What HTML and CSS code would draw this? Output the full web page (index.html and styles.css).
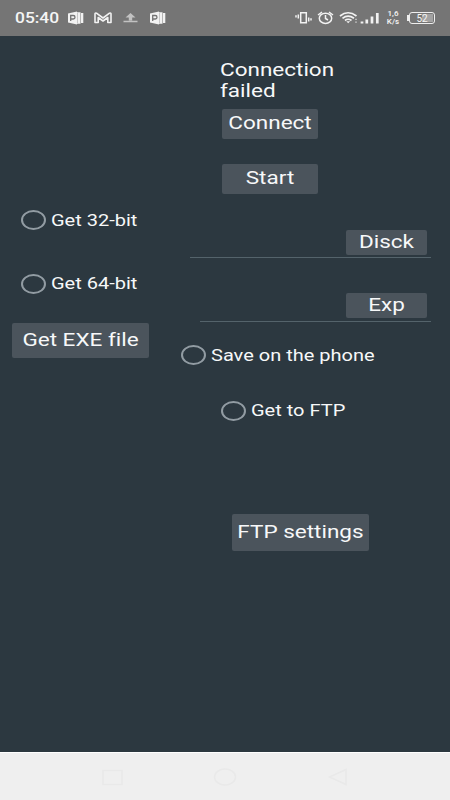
FILE: index.html
```html
<!DOCTYPE html>
<html lang="en">
<head>
<meta charset="utf-8">
<title>Connection</title>
<link rel="stylesheet" href="styles.css">
</head>
<body>
<div class="phone">
  <header class="status">
    <span class="clock"><span class="wide">05:40</span></span>
    <svg class="status-icons" width="102" height="36" viewBox="0 0 102 36" fill="#f2f2f2">
      <g id="doc">
        <path d="M0 13.500L9 11.500V24.500L0 22.500ZM9 12.200H12.500V23.800H9ZM13 13H15.300V23H13Z"/>
        <path d="M2.700 21V15.500H5.200Q7 15.500 7 17.200T5.200 19H3" fill="none" stroke="#757575" stroke-width="1.300"/>
        <path d="M9.500 13V23" stroke="#aaa" stroke-width=".6"/>
      </g>
      <path d="M27 22.500V14Q27 12.700 28.500 13.200L35 18L41.500 13.200Q43 12.700 43 14V22.500H39.800V17.500L35 21L30.200 17.500V22.500Z" fill="none" stroke="#f2f2f2" stroke-width="1.600" stroke-linejoin="round"/>
      <path d="M62.500 13L67.500 17.500H64.200V20.500H60.800V17.500H57.500ZM55.500 20.800H69.500V22.300H55.500Z" fill="#c2c2c2"/>
      <use href="#doc" x="82"/>
    </svg>
    <svg class="status-icons right" width="84" height="36" viewBox="0 0 84 36" fill="none" stroke="#f2f2f2" stroke-width="1.500">
      <path d="M5.700 12.800H11.300V22.700H5.700ZM3.300 14.500V18.500M1 15.200V17.500M13.700 17.500V21.500M16 18.200V20.500"/>
      <ellipse cx="30.500" cy="18.300" rx="6.200" ry="5.100"/>
      <path d="M30.500 15V18.500L33 20M23 15L27 12M38 15L34 12"/>
      <path d="M45 16Q53 9.500 61.500 16M47.500 18.300Q53 13.800 59 18.300M50 20.500Q53 18 56.500 20.500" stroke-width="1.700"/>
      <path d="M51.300 21.200L53.200 23.200L55.200 21.200Z" fill="#f2f2f2" stroke="none"/>
      <path d="M61 18.800V20M61 21.500V22.700" stroke="#cfcfcf"/>
      <path d="M67 21.500V23.500M71.800 19.500V23.500M77 16.500V23.500M82.300 13V23.500" stroke-width="2.700"/>
    </svg>
    <span class="speed"><span>1,6</span><span>K/s</span></span>
    <span class="battery"><span class="level">52</span></span>
  </header>

  <main class="screen">
    <section class="left">
      <label class="radio low"><i class="ring"></i><span class="wide">Get 32-bit</span></label>
      <label class="radio second"><i class="ring"></i><span class="wide">Get 64-bit</span></label>
      <button class="btn exe"><span class="wide">Get EXE file</span></button>
    </section>
    <section class="right-side">
      <p class="message"><span class="wide">Connection<br>failed</span></p>
      <button class="btn connect"><span class="wide">Connect</span></button>
      <button class="btn connect start"><span class="wide">Start</span></button>
      <div class="field disk"><button class="btn small"><span class="wide">Disck</span></button></div>
      <div class="field export"><button class="btn small"><span class="wide">Exp</span></button></div>
      <label class="radio low save"><i class="ring"></i><span class="wide">Save on the phone</span></label>
      <label class="radio ftp"><i class="ring"></i><span class="wide">Get to FTP</span></label>
      <button class="btn settings"><span class="wide">FTP settings</span></button>
    </section>
  </main>

  <nav class="nav">
    <svg width="450" height="47" viewBox="0 0 450 47" fill="none" stroke="#e9e9e9" stroke-width="1.500">
      <path d="M103 17.500H122V31.500H103Z"/>
      <ellipse cx="225" cy="24" rx="10.500" ry="8"/>
      <path d="M346 16.500V31.500L329.500 24Z"/>
    </svg>
  </nav>
</div>
</body>
</html>
```
FILE: styles.css
```css
* { box-sizing: border-box; }
body { margin: 0; }
.phone {
  width: 450px;
  height: 800px;
  display: flex;
  flex-direction: column;
  overflow: hidden;
  background: #2c3840;
  color: #f7f8f9;
  font-family: Roboto, sans-serif;
  font-size: 18px;
  font-variant-ligatures: none;
}
.wide {
  display: inline-block;
  transform: scaleX(1.25);
  white-space: nowrap;
}
.status {
  height: 36px;
  flex: none;
  display: flex;
  align-items: center;
  padding-left: 15px;
  background: #757575;
  color: #f5f5f5;
}
.clock { width: 53px; font-size: 15px; font-weight: 500; line-height: 37px; }
.clock .wide, .radio .wide, .message .wide { transform-origin: left; }
.clock .wide { transform: scaleX(1.16); }
.status-icons { flex: none; }
.status-icons.right { margin-left: 125px; overflow: visible; }
.speed {
  width: 14px;
  margin-left: 7px;
  display: flex;
  flex-direction: column;
  align-items: center;
  font-size: 8px;
  line-height: 8px;
  font-weight: 500;
}
.battery {
  width: 26px;
  height: 12px;
  margin-left: 9px;
  position: relative;
  border: 1px solid #eee;
  border-radius: 3px;
  padding: 1px;
}
.battery::before {
  content: "";
  position: absolute;
  left: -3px;
  top: 2px;
  width: 2px;
  height: 6px;
  background: #eee;
}
.level {
  display: block;
  height: 8px;
  background: linear-gradient(90deg, #757575 48%, #a2a2a2 48%);
  font-size: 10px;
  line-height: 9px;
  text-align: center;
}
.screen {
  height: 716px;
  flex: none;
  display: grid;
  grid-template-columns: 180px 270px;
}
.left { padding: 174px 0 0 12px; }
.right-side { padding-top: 24px; }
.btn {
  display: block;
  padding: 0 0 1.500px;
  border: 0;
  border-radius: 2px;
  background: #4b545c;
  color: inherit;
  font: inherit;
  line-height: 20px;
  text-align: center;
}
.btn .wide { display: block; }
.radio {
  height: 20px;
  display: flex;
  align-items: center;
  font-size: 16px;
}
.radio .wide { line-height: 20px; transform: scaleX(1.25); }
.radio.low .wide { transform: translateY(.5px) scaleX(1.25); }
.ring {
  width: 25px;
  height: 20px;
  flex: none;
  margin-right: 5px;
  border: 2px solid #929ca3;
  border-radius: 50%;
}
.left .radio { margin-left: 9px; }
.left .second { margin-top: 44px; }
.exe { width: 137px; height: 35px; margin-top: 29px; }
.message { margin: 0 0 8px 40px; line-height: 20.500px; }
.connect { width: 96px; height: 29.500px; margin-left: 42px; }
.start { margin-top: 25.500px; padding-bottom: 1px; }
.field {
  display: flex;
  justify-content: flex-end;
  margin-right: 19px;
  padding-right: 4px;
  border-bottom: 1px solid #54636b;
}
.small { width: 81px; height: 24.500px; padding-bottom: 1px; }
.disk { height: 28px; margin-left: 10px; margin-top: 36.500px; }
.export { height: 28px; margin-left: 20px; margin-top: 36px; }
.export .small { margin-top: -1px; padding-bottom: 1px; }
.save { margin: 23px 0 0 1px; }
.ftp { margin: 36px 0 0 41px; }
.settings { width: 137px; height: 37px; margin: 93px 0 0 52px; }
.nav {
  height: 48px;
  flex: none;
  background: #efefef;
  border-top: 1px solid #fff;
}
.nav svg { display: block; }
```
